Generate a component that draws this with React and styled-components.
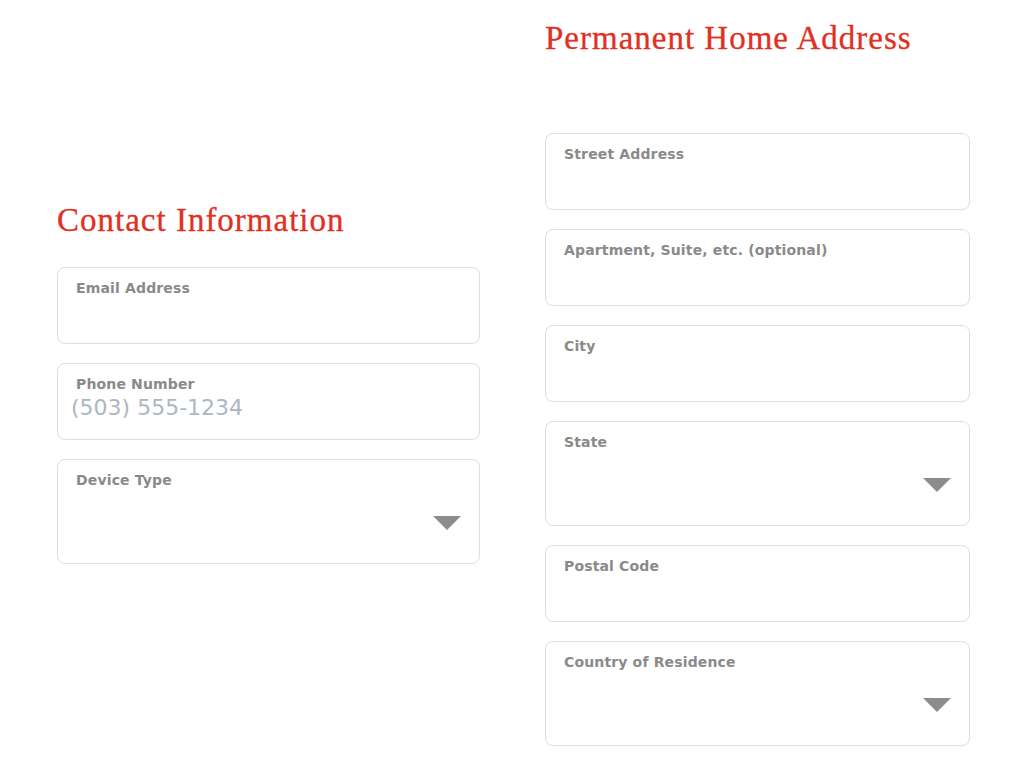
import React from "react";
import styled, { createGlobalStyle } from "styled-components";

const Global = createGlobalStyle`
  html, body { margin: 0; padding: 0; background: #ffffff; }
  * { box-sizing: border-box; }
`;

const Page = styled.div`
  display: grid;
  grid-template-columns: 423px 425px;
  column-gap: 65px;
  padding-left: 57px;
  align-items: start;
`;

const Column = styled.section`
  display: flex;
  flex-direction: column;
  padding-top: ${(p) => p.$top}px;
`;

const Heading = styled.h2`
  margin: 0 0 ${(p) => p.$gap}px 0;
  font-family: "Liberation Serif", "DejaVu Serif", serif;
  font-weight: 400;
  font-size: 33px;
  line-height: 40px;
  color: #e1301f;
  letter-spacing: 1px;
  -webkit-text-stroke: 0.3px #e1301f;
`;

const Fields = styled.div`
  display: flex;
  flex-direction: column;
  gap: 19px;
`;

const Field = styled.label`
  position: relative;
  display: flex;
  flex-direction: column;
  height: ${(p) => (p.$tall ? 105 : 77)}px;
  border: 1.5px solid #dedede;
  border-radius: 8px;
  padding: 10px 18px 0 18px;
  background: #fff;
`;

const Label = styled.span`
  font-family: "DejaVu Sans", "Liberation Sans", sans-serif;
  font-weight: 700;
  font-size: 14px;
  line-height: 20px;
  letter-spacing: 0.15px;
  color: #8a8a8a;
`;

const Input = styled.input`
  border: none;
  outline: none;
  background: transparent;
  padding: 0;
  margin: 0 0 0 -5px;
  font-family: "DejaVu Sans", "Open Sans", sans-serif;
  font-size: 22px;
  line-height: 28px;
  color: #555;
  &::placeholder { color: #adb7bf; }
`;

const Caret = styled.span`
  position: absolute;
  right: 18px;
  top: 56px;
  width: 0;
  height: 0;
  border-left: 14.5px solid transparent;
  border-right: 14.5px solid transparent;
  border-top: 14px solid #8c8c8c;
`;

function TextField({ label, placeholder }) {
  return (
    <Field>
      <Label>{label}</Label>
      <Input placeholder={placeholder || ""} />
    </Field>
  );
}

function SelectField({ label }) {
  return (
    <Field $tall>
      <Label>{label}</Label>
      <Caret />
    </Field>
  );
}

export default function App() {
  return (
    <>
      <Global />
      <Page>
        <Column $top={200}>
          <Heading $gap={27}>Contact Information</Heading>
          <Fields>
            <TextField label="Email Address" />
            <TextField label="Phone Number" placeholder="(503) 555-1234" />
            <SelectField label="Device Type" />
          </Fields>
        </Column>
        <Column $top={18}>
          <Heading $gap={75}>Permanent Home Address</Heading>
          <Fields>
            <TextField label="Street Address" />
            <TextField label="Apartment, Suite, etc. (optional)" />
            <TextField label="City" />
            <SelectField label="State" />
            <TextField label="Postal Code" />
            <SelectField label="Country of Residence" />
          </Fields>
        </Column>
      </Page>
    </>
  );
}
